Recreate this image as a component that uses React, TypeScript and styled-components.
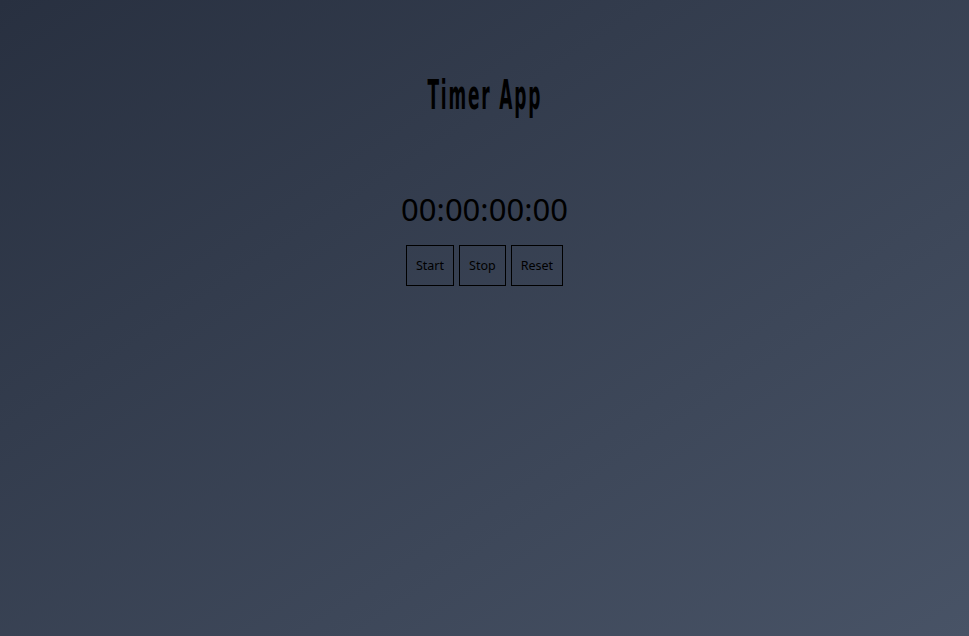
import styled, { createGlobalStyle } from "styled-components";
import { useEffect, useRef, useState } from "react";

const GlobalStyle = createGlobalStyle`
  html, body {
    margin: 0;
    padding: 0;
    height: 100%;
  }
  body {
    font-family: "Open Sans", "Noto Sans", sans-serif;
  }
`;

const Page = styled.div`
  min-height: 100vh;
  display: flex;
  flex-direction: column;
  align-items: center;
  background: linear-gradient(to bottom right, #283040, #485366);
  color: #000;
`;

const Title = styled.h1`
  display: inline-block;
  margin: 72px 0 0;
  font-family: "Liberation Sans Narrow", "DejaVu Sans Condensed", sans-serif;
  font-weight: 700;
  font-size: 41px;
  letter-spacing: 4px;
  line-height: 46px;
  transform: scaleX(0.46);
`;

const Clock = styled.div`
  margin-top: 71px;
  font-family: "Noto Sans", sans-serif;
  font-size: 31px;
  line-height: 40px;
`;

const Controls = styled.div`
  display: flex;
  gap: 5px;
  margin-top: 16px;
`;

const Button = styled.button`
  height: 41px;
  padding: 0 9px;
  background: transparent;
  border: 1px solid #000;
  color: #000;
  font-family: "Noto Sans", sans-serif;
  font-size: 12.5px;
  cursor: pointer;
`;

const pad = (n: number) => String(n).padStart(2, "0");

export default function App() {
  const [ms, setMs] = useState(0);
  const timerRef = useRef<number | null>(null);

  const start = () => {
    if (timerRef.current) return;
    timerRef.current = window.setInterval(() => setMs((v) => v + 10), 10);
  };

  const stop = () => {
    if (timerRef.current) {
      clearInterval(timerRef.current);
      timerRef.current = null;
    }
  };

  const reset = () => {
    stop();
    setMs(0);
  };

  useEffect(() => stop, []);

  const hours = Math.floor(ms / 3600000);
  const minutes = Math.floor(ms / 60000) % 60;
  const seconds = Math.floor(ms / 1000) % 60;
  const centis = Math.floor(ms / 10) % 100;

  return (
    <>
      <GlobalStyle />
      <Page>
        <Title>Timer App</Title>
        <Clock>
          {pad(hours)}:{pad(minutes)}:{pad(seconds)}:{pad(centis)}
        </Clock>
        <Controls>
          <Button onClick={start}>Start</Button>
          <Button onClick={stop}>Stop</Button>
          <Button onClick={reset}>Reset</Button>
        </Controls>
      </Page>
    </>
  );
}
